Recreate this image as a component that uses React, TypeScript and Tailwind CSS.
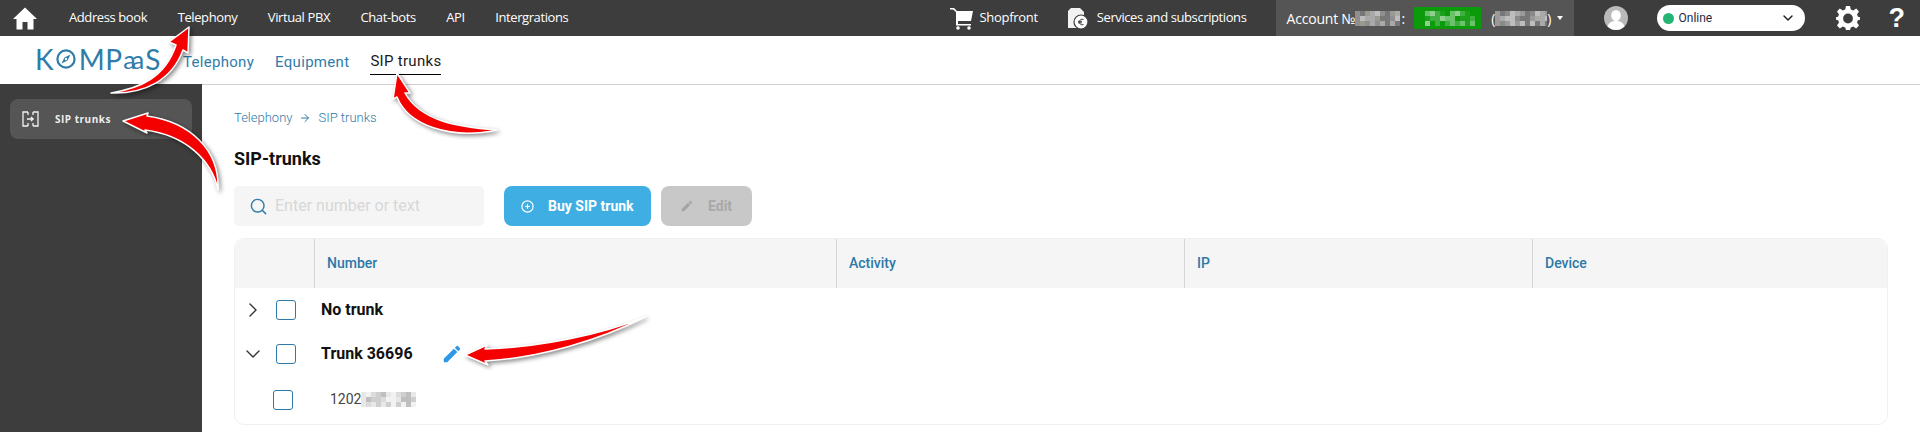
import { ArrowRight, ChevronDown, ChevronRight, Search } from "lucide-react";

const navItems = ["Address book", "Telephony", "Virtual PBX", "Chat-bots", "API", "Intergrations"];
const columns = [
  { label: "Number", width: "w-[522px]" },
  { label: "Activity", width: "w-[348px]" },
  { label: "IP", width: "w-[348px]" },
  { label: "Device", width: "flex-1" },
];

// pixelated patch standing in for the censored bits of the screenshot
function Blur({ w, h, cell, colors }: { w: number; h: number; cell: number; colors: string[] }) {
  const cols = Math.ceil(w / cell);
  const rows = Math.ceil(h / cell);
  const rects = [];
  for (let y = 0; y < rows; y++) {
    for (let x = 0; x < cols; x++) {
      const c = colors[(x * 7 + y * 5 + ((x * y) % 3)) % colors.length];
      rects.push(<rect key={`${x}-${y}`} x={x * cell} y={y * cell} width={cell} height={cell} fill={c} />);
    }
  }
  return (
    <svg width={w} height={h} className="shrink-0" shapeRendering="crispEdges">
      {rects}
    </svg>
  );
}

function Logo() {
  return (
    <div className="flex items-center text-[#2f7ca8] font-['Lato',sans-serif] text-[28px] leading-none w-[123px] -mt-[3px]">
      <span>K</span>
      <svg width="20" height="20" viewBox="0 0 20 20" className="ml-[2px] mr-[3px] shrink-0">
        <circle cx="10" cy="10" r="8.6" fill="none" stroke="#2f7ca8" strokeWidth="2.2" />
        <path d="M14.5 5.5 L11.6 11.6 L5.5 14.5 L8.4 8.4 Z" fill="#2f7ca8" />
        <circle cx="10" cy="10" r="1.2" fill="#fff" />
      </svg>
      <span>MP</span>
      <span className="text-[25px] tracking-[-4px] ml-[1px] mt-[2px]">aa</span>
      <span className="ml-[5px]">S</span>
    </div>
  );
}

function Checkbox() {
  return <div className="w-5 h-5 rounded-[3px] border border-[#2d79a7] bg-white shrink-0" />;
}

function Arrow({ d }: { d: string }) {
  return (
    <path
      d={d}
      fill="#f50000"
      stroke="#fff"
      strokeWidth="1.5"
      strokeLinejoin="round"
      style={{ filter: "drop-shadow(2px 2px 2px rgba(0,0,0,0.45))" }}
    />
  );
}

export default function App() {
  return (
    <div className="relative w-[1920px] h-[432px] overflow-hidden bg-white flex flex-col font-['Roboto',sans-serif]">
      <header className="h-9 bg-[#3d3d3d] flex items-center text-white font-['Open_Sans',sans-serif] text-[13px] whitespace-nowrap shrink-0">
        <svg width="24" height="24" viewBox="0 0 24 24" className="ml-[13px] shrink-0" fill="#fff">
          <path d="M12 1.5 L24 13 L20.5 13 L20.5 23.5 L14.5 23.5 L14.5 16 L9.5 16 L9.5 23.5 L3.5 23.5 L3.5 13 L0 13 Z" />
        </svg>
        <nav className="flex items-center gap-[30.5px] ml-[32px] tracking-[-0.4px]">
          {navItems.map((item) => (
            <span key={item}>{item}</span>
          ))}
        </nav>
        <div className="flex items-center ml-auto">
          <svg width="24" height="24" viewBox="0 0 24 24" fill="#fff" className="shrink-0">
            <path d="M0 2 L4 2 L7 5 L23 5 L21 15 L8 15 L8 18 L21 18 L21 19.5 L6 19.5 L6 6 L3 3.5 L0 3.5 Z" />
            <circle cx="8" cy="22" r="1.8" />
            <circle cx="19" cy="22" r="1.8" />
          </svg>
          <span className="ml-[5px] tracking-[-0.3px]">Shopfront</span>
          <svg width="24" height="24" viewBox="0 0 24 24" className="ml-[28px] shrink-0">
            <path d="M5 2 L14 2 L18 6 L18 22 L2 22 L2 5 Z" fill="#f2f2f2" />
            <circle cx="15" cy="16" r="7" fill="#fff" stroke="#3d3d3d" strokeWidth="1.2" />
            <path d="M17.5 13.5 C15 12.5 13.5 14 13.5 16 C13.5 18 15 19.5 17.5 18.5 M12 15.3 H16 M12 16.8 H16" fill="none" stroke="#3d3d3d" strokeWidth="1" />
          </svg>
          <span className="ml-[7px] tracking-[-0.4px]">Services and subscriptions</span>
        </div>
        <div className="ml-[29px] w-[298px] h-9 bg-[#555555] flex items-center pl-[11px] text-[14px]">
          <span className="tracking-[-0.2px]">Account №</span>
          <Blur w={45} h={15} cell={5} colors={["#8f8f8f", "#a9a9a9", "#777777", "#bdbdbd", "#9a9a90"]} />
          <span className="ml-[1px]">:</span>
          <div className="ml-[9px] w-[67px] h-[22px] bg-[#0a9a0a] rounded-[1px] flex items-center justify-center">
            <Blur w={55} h={15} cell={5} colors={["#0a9a0a", "#3fb03f", "#6cc26c", "#1ea01e", "#8fd08f"]} />
          </div>
          <span className="ml-[10px]">(</span>
          <Blur w={52} h={15} cell={5} colors={["#9a9a9a", "#bdbdbd", "#777777", "#aaaaaa", "#8a8a8a"]} />
          <span>)</span>
          <div className="ml-[6px] w-0 h-0 border-x-[3.5px] border-x-transparent border-t-[4px] border-t-white" />
        </div>
        <svg width="24" height="24" viewBox="0 0 24 24" className="ml-[30px] shrink-0">
          <circle cx="12" cy="12" r="12" fill="#b9b9b9" />
          <ellipse cx="12" cy="9.5" rx="4.8" ry="5.5" fill="#fff" />
          <path d="M3.5 20.5 C5 16 8.5 15 12 15 C15.5 15 19 16 20.5 20.5 C18 23 15 24 12 24 C9 24 6 23 3.5 20.5 Z" fill="#fff" />
        </svg>
        <div className="ml-[29px] w-[148px] h-[26px] rounded-full bg-white flex items-center pl-[6px] pr-[9px] font-['Roboto',sans-serif] text-[12px] text-[#1f2a44]">
          <span className="w-[11px] h-[11px] rounded-full bg-[#22b573] shrink-0" />
          <span className="ml-[5px] flex-1">Online</span>
          <ChevronDown size={16} strokeWidth={2.2} className="text-[#222]" />
        </div>
        <svg width="24" height="24" viewBox="0 0 24 24" className="ml-[31px] shrink-0" fill="#fff">
          <path
            fillRule="evenodd"
            d="M10 0 H14 L14.8 3.4 L17.2 4.4 L20.2 2.5 L23 5.5 L21 8.4 L22 10.8 L24 11.2 V13.8 L21.9 14.2 L21 16.6 L23 19.6 L20.2 22.4 L17.2 20.6 L14.8 21.6 L14 24 H10 L9.2 21.6 L6.8 20.6 L3.8 22.4 L1 19.6 L3 16.6 L2.1 14.2 L0 13.8 V11.2 L2 10.8 L3 8.4 L1 5.5 L3.8 2.5 L6.8 4.4 L9.2 3.4 Z M12 7.6 A4.9 4.9 0 1 0 12 17.4 A4.9 4.9 0 1 0 12 7.6 Z"
          />
        </svg>
        <span className="ml-[29px] mr-[15px] text-[27px] font-bold leading-none font-['Liberation_Sans',sans-serif]">?</span>
      </header>

      <div className="h-[49px] border-b border-[#cfcfcf] flex items-center shrink-0 text-[15px] tracking-[0.3px] text-[#2f7ca8]">
        <div className="ml-[35px]">
          <Logo />
        </div>
        <span className="ml-[25px] mt-[5px]">Telephony</span>
        <span className="ml-[21px] mt-[5px]">Equipment</span>
        <span className="ml-[21px] text-[#1a1a1a] border-b border-black h-[26px] leading-[25px] mt-[3px]">SIP trunks</span>
      </div>

      <div className="flex-1 flex min-h-0">
        <aside className="w-[202px] bg-[#3d3d3d] px-[10px] pt-[15px] -mt-px shrink-0">
          <div className="h-10 rounded-[8px] bg-[#555555] flex items-center pl-3 text-white">
            <svg width="17" height="16" viewBox="0 0 17 16" fill="none" stroke="#f2f2f2" strokeWidth="1.3" className="shrink-0">
              <path d="M6 1 H1 V15 H6 M6 1 V4 M6 12 V15 M11 1 H16 V15 H11 M11 1 V4 M11 12 V15" />
              <path d="M5 8 H11 M9 6 L11.2 8 L9 10" />
            </svg>
            <span className="ml-4 text-[10px] font-bold tracking-[0.5px] font-['Open_Sans',sans-serif] text-[#eeeeee]">SIP trunks</span>
          </div>
        </aside>

        <main className="flex-1 pl-8 pr-8 min-w-0">
          <div className="mt-[24px] h-[18px] flex items-center text-[13px] font-light text-[#2f7ca8]">
            <span>Telephony</span>
            <ArrowRight size={12} strokeWidth={2} className="mx-[7px]" />
            <span>SIP trunks</span>
          </div>
          <h1 className="mt-[20px] h-[24px] leading-[24px] text-[18px] font-bold text-[#111]">SIP-trunks</h1>
          <div className="mt-[15px] flex items-center">
            <div className="w-[250px] h-10 rounded-[5px] bg-[#f5f5f5] flex items-center pl-[15px] text-[16px] text-[#d8d8d8]">
              <Search size={19} strokeWidth={1.8} className="text-[#2f7ca8] shrink-0" />
              <span className="ml-[7px]">Enter number or text</span>
            </div>
            <button className="ml-5 w-[147px] h-10 rounded-[8px] bg-[#3faee3] flex items-center pl-[17px] text-white text-[14px] font-bold">
              <svg width="13" height="13" viewBox="0 0 13 13" fill="none" stroke="#fff" strokeWidth="1.2" className="shrink-0">
                <circle cx="6.5" cy="6.5" r="5.6" />
                <path d="M6.5 4 V9 M4 6.5 H9" />
              </svg>
              <span className="ml-[14px]">Buy SIP trunk</span>
            </button>
            <button className="ml-[10px] w-[91px] h-10 rounded-[8px] bg-[#c8c8c8] flex items-center pl-[19px] text-[#a9a9a9] text-[14px] font-bold">
              <svg width="14" height="14" viewBox="0 0 24 24" fill="#a5a5a5" className="shrink-0">
                <path d="M3 17.25V21h3.75L17.8 9.94l-3.75-3.75L3 17.25zM20.7 7.04a1 1 0 0 0 0-1.41l-2.34-2.34a1 1 0 0 0-1.41 0l-1.83 1.83 3.75 3.75 1.83-1.83z" />
              </svg>
              <span className="ml-[14px]">Edit</span>
            </button>
          </div>

          <div className="mt-3 rounded-[10px] border border-[#f0f0f0] h-[187px] w-[1654px]">
            <div className="h-[49px] bg-[#f5f5f5] rounded-t-[10px] flex text-[14px] font-medium text-[#2d79a7]">
              <div className="w-[80px] border-r border-[#d5d5d5]" />
              {columns.map((c, i) => (
                <div key={c.label} className={`${c.width} ${i < 3 ? "border-r border-[#d5d5d5]" : ""} flex items-center pl-[12px]`}>
                  {c.label}
                </div>
              ))}
            </div>
            <div className="h-[43px] flex items-center text-[16px] font-bold text-[#111]">
              <ChevronRight size={24} strokeWidth={1.4} className="ml-[6px] text-[#333] shrink-0" />
              <div className="ml-[11px]"><Checkbox /></div>
              <span className="ml-[25px]">No trunk</span>
            </div>
            <div className="h-[45px] flex items-center text-[16px] font-bold text-[#111]">
              <ChevronDown size={24} strokeWidth={1.4} className="ml-[6px] text-[#333] shrink-0" />
              <div className="ml-[11px]"><Checkbox /></div>
              <span className="ml-[25px]">Trunk 36696</span>
              <svg width="22" height="22" viewBox="0 0 24 24" fill="#2c98e8" className="ml-[28px] shrink-0">
                <path d="M3 17.25V21h3.75L17.8 9.94l-3.75-3.75L3 17.25zM20.7 7.04a1 1 0 0 0 0-1.41l-2.34-2.34a1 1 0 0 0-1.41 0l-1.83 1.83 3.75 3.75 1.83-1.83z" />
              </svg>
            </div>
            <div className="h-[47px] flex items-center text-[14px] text-[#444]">
              <div className="ml-[38px]"><Checkbox /></div>
              <span className="ml-[37px]">1202</span>
              <Blur w={55} h={15} cell={5} colors={["#e8e8e8", "#cfcfcf", "#f2f2f2", "#bfbfbf", "#dcdcdc"]} />
            </div>
          </div>
        </main>
      </div>

      {/* red annotation arrows drawn over the screenshot */}
      <svg width="1920" height="432" className="absolute inset-0 pointer-events-none">
        <Arrow d="M111 93 C140 88 165 78 176 45 L169 42 L189 27 L188 53 L183 50 C172 80 145 94 111 93 Z" />
        <Arrow d="M497 130 C455 127 420 120 405 93 L410 93 L397 73 L393 99 L397 97 C408 125 450 140 497 130 Z" />
        <Arrow d="M218 190 C220 150 190 122 147 116 L148 113 L123 121 L147 133 L145 130 C185 135 212 160 218 190 Z" />
        <Arrow d="M645 317 C600 335 540 347 485 349 L487 345 L465 355 L488 365 L485 361 C540 358 600 340 645 317 Z" />
      </svg>
    </div>
  );
}
